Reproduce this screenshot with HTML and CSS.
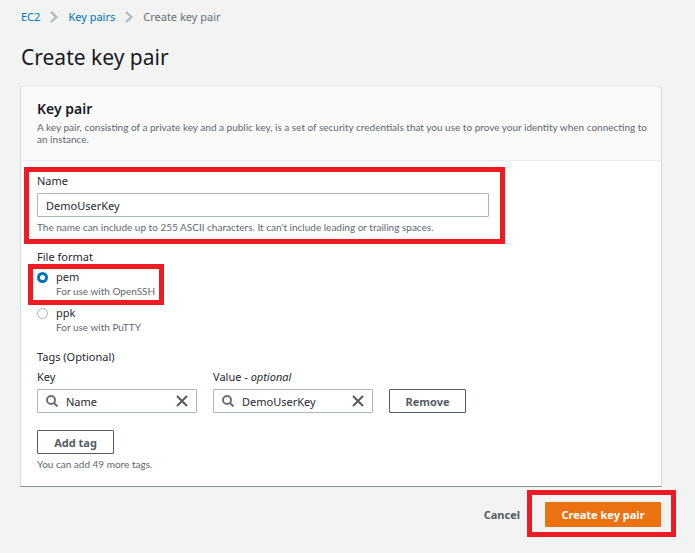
FILE: index.html
```html
<!DOCTYPE html>
<html lang="en">
<head>
  <meta charset="UTF-8" />
  <meta name="viewport" content="width=device-width, initial-scale=1" />
  <title>Create key pair</title>
  <link rel="stylesheet" href="styles.css">
</head>
<body>
  <nav class="breadcrumbs" aria-label="Breadcrumbs">
    <a href="#">EC2</a>
    <svg class="chevron" viewBox="0 0 8 12"><path d="M1 1l5.5 5L1 11" /></svg>
    <a href="#">Key pairs</a>
    <svg class="chevron" viewBox="0 0 8 12"><path d="M1 1l5.5 5L1 11" /></svg>
    <span>Create key pair</span>
  </nav>

  <h1>Create key pair</h1>

  <form id="keyPairForm" onsubmit="return false;">
    <section class="card">
      <header class="card-header">
        <h2>Key pair</h2>
        <p>A key pair, consisting of a private key and a public key, is a set of security credentials that you use to prove your identity when connecting to an instance.</p>
      </header>

      <div class="card-body">
        <div class="field name-field highlight">
          <label for="name">Name</label>
          <input type="text" id="name" class="text-input" value="DemoUserKey">
          <p class="hint">The name can include up to 255 ASCII characters. It can't include leading or trailing spaces.</p>
        </div>

        <fieldset class="field">
          <legend>File format</legend>
          <div class="option highlight">
            <input type="radio" id="pem" name="format" checked>
            <label for="pem">pem<span class="option-hint">For use with OpenSSH</span></label>
          </div>
          <div class="option">
            <input type="radio" id="ppk" name="format">
            <label for="ppk">ppk<span class="option-hint">For use with PuTTY</span></label>
          </div>
        </fieldset>

        <fieldset class="field">
          <legend>Tags (Optional)</legend>
          <div class="tag-row">
            <div class="tag-cell">
              <label for="tagKey">Key</label>
              <div class="search-box">
                <svg class="icon search" viewBox="0 0 12 12"><circle cx="5" cy="5" r="4" /><path d="M8 8l3.5 3.5" /></svg>
                <input type="text" id="tagKey" value="Name">
                <button type="button" class="clear" aria-label="Clear key"><svg class="icon" viewBox="0 0 12 12"><path d="M1 1l10 10M11 1L1 11" /></svg></button>
              </div>
            </div>
            <div class="tag-cell">
              <label for="tagValue">Value - <i>optional</i></label>
              <div class="search-box">
                <svg class="icon search" viewBox="0 0 12 12"><circle cx="5" cy="5" r="4" /><path d="M8 8l3.5 3.5" /></svg>
                <input type="text" id="tagValue" value="DemoUserKey">
                <button type="button" class="clear" aria-label="Clear value"><svg class="icon" viewBox="0 0 12 12"><path d="M1 1l10 10M11 1L1 11" /></svg></button>
              </div>
            </div>
            <button type="button" class="btn">Remove</button>
          </div>
          <button type="button" class="btn">Add tag</button>
          <p class="hint">You can add 49 more tags.</p>
        </fieldset>
      </div>
    </section>

    <div class="actions">
      <button type="button" class="btn btn-link">Cancel</button>
      <div class="highlight submit-wrap">
        <button type="submit" class="btn btn-primary">Create key pair</button>
      </div>
    </div>
  </form>
</body>
</html>
```
FILE: styles.css
```css
* {
  box-sizing: border-box;
}

body {
  margin: 0;
  padding: 8px 33px 16px 20px;
  background: #f2f3f3;
  color: #26292f;
  font-family: "Noto Sans", "Open Sans", sans-serif;
  font-size: 11px;
  line-height: 18px;
}

h1, h2, p, fieldset, legend {
  margin: 0;
  padding: 0;
  border: 0;
}

h1, h2 {
  color: #16191f;
}

input, button {
  font-family: inherit;
  font-size: 11px;
  color: #26292f;
}

/* Breadcrumbs */
.breadcrumbs {
  display: flex;
  align-items: center;
  gap: 10px;
  padding-left: 1px;
  color: #687078;
}

.breadcrumbs a {
  color: #0073bb;
  text-decoration: none;
}

.chevron {
  width: 8px;
  height: 12px;
  fill: none;
  stroke: #aab7b8;
  stroke-width: 2;
}

h1 {
  margin: 16px 0 14px;
  padding-left: 1px;
  font-size: 21px;
  font-weight: 400;
  line-height: 30px;
}

/* Card */
.card {
  background: #fff;
  border: 1px solid #d5dbdb;
  border-top-color: #eaeded;
  border-bottom-color: #879596;
}

.card-header {
  padding: 12px 12px 15px 16px;
  background: #fafafa;
  border-bottom: 1px solid #eaeded;
}

.card-header h2 {
  margin-bottom: 2px;
  font-size: 14px;
  font-weight: 600;
  line-height: 20px;
}

.card-header p, .hint, .option-hint {
  color: #606870;
  font-family: Lato, "Noto Sans", sans-serif;
  font-size: 10px;
  line-height: 12px;
}

.card-body {
  padding: 11px 16px 16px;
}

.field + .field {
  margin-top: 15px;
}

.field > label, legend, .tag-cell label {
  display: block;
}

.hint {
  margin-top: 4px;
}

.name-field {
  max-width: 452px;
}

.text-input, .search-box {
  width: 100%;
  height: 24px;
  margin-top: 3px;
  background: #fff;
  border: 1px solid #aab7b8;
  border-radius: 1px;
}

.text-input {
  display: block;
  padding: 0 8px;
}

/* Red frames around the parts to fill in */
.highlight {
  position: relative;
}

.highlight::after {
  content: "";
  position: absolute;
  inset: -5px -16px -11px -13px;
  border: 5px solid #ed1c24;
  pointer-events: none;
}

.option.highlight::after {
  inset: -5px -9px -8px -9px;
}

.submit-wrap::after {
  inset: -12px -15px -10px -18px;
}

/* Radio options */
.option {
  display: flex;
  gap: 8px;
  width: fit-content;
  margin-top: 8px;
  line-height: 16px;
}

legend + .option {
  margin-top: 3px;
}

.option input {
  appearance: none;
  flex: none;
  width: 11px;
  height: 11px;
  margin: 3px 0 0;
  border: 1px solid #aab7b8;
  border-radius: 50%;
}

.option input:checked {
  border: 3px solid #0073bb;
}

.option-hint {
  display: block;
}

/* Tags */
.tag-row {
  display: flex;
  flex-wrap: wrap;
  align-items: flex-end;
  gap: 16px;
  margin: 2px 0 17px;
}

.tag-cell {
  width: 160px;
}

.search-box {
  display: flex;
  align-items: center;
  gap: 8px;
  padding: 0 8px;
}

.search-box input {
  flex: 1;
  min-width: 0;
  padding: 0;
  border: 0;
  outline: none;
}

.icon {
  display: block;
  flex: none;
  width: 12px;
  height: 12px;
  fill: none;
  stroke: #545b64;
  stroke-width: 2;
}

.search {
  stroke: #687078;
}

.clear {
  padding: 0;
  background: none;
  border: 0;
  cursor: pointer;
}

/* Buttons */
.btn {
  min-width: 77px;
  height: 24px;
  padding: 0 15px;
  background: #fff;
  border: 1px solid #545b64;
  border-radius: 1px;
  color: #545b64;
  font-weight: 700;
  white-space: nowrap;
  cursor: pointer;
}

.btn-link {
  min-width: 0;
  padding: 0;
  background: none;
  border-color: transparent;
}

.btn-primary {
  min-width: 116px;
  height: 25px;
  background: #ec7211;
  border-color: #ec7211;
  color: #fff;
}

.actions {
  display: flex;
  justify-content: flex-end;
  align-items: center;
  gap: 24px;
  margin: 15px 1px 0 0;
}
```
